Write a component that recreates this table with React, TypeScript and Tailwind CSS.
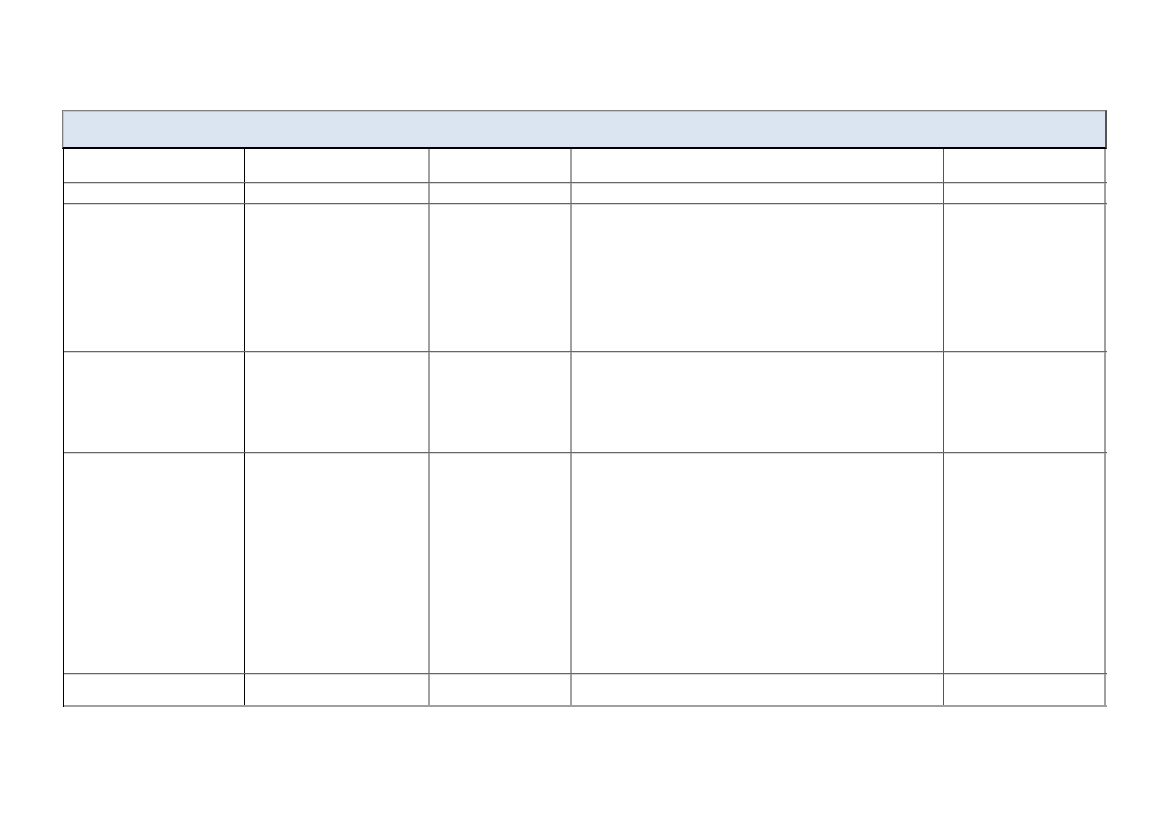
const rows = [34, 21, 148, 101, 221, 33];

function Row({ h, last }: { h: number; last: boolean }) {
  return (
    <div
      className={`flex box-border ${
        last
          ? "border-b-2 border-[#a0a0a0]"
          : "border-b border-[#666666] shadow-[0_1px_0_#d6d6d6]"
      }`}
      style={{ height: h }}
    >
      <div className="w-[181px] shrink-0 border-r border-black" />
      <div className="w-[185px] shrink-0 border-r-2 border-[#a0a0a0]" />
      <div className="w-[142px] shrink-0 border-r-2 border-[#a0a0a0]" />
      <div className="w-[372px] shrink-0 border-r border-[#555555]" />
      <div className="w-[162px] shrink-0 border-r-2 border-[#a0a0a0]" />
    </div>
  );
}

export default function App() {
  return (
    <div className="w-[1169px] h-[827px] bg-white font-['Liberation_Sans',sans-serif]">
      <div className="ml-[62px] pt-[110px] w-[1045px]">
        <div className="h-[39px] box-border bg-[#dbe5f1] border border-[#808080] border-r-2 border-r-[#555555] border-b-2 border-b-black shadow-[inset_1px_1px_0_#c4c4c4]" />
        <div className="ml-px border-l border-black box-border w-[1044px]">
          {rows.map((h, i) => (
            <Row key={i} h={h} last={i === rows.length - 1} />
          ))}
        </div>
      </div>
    </div>
  );
}
